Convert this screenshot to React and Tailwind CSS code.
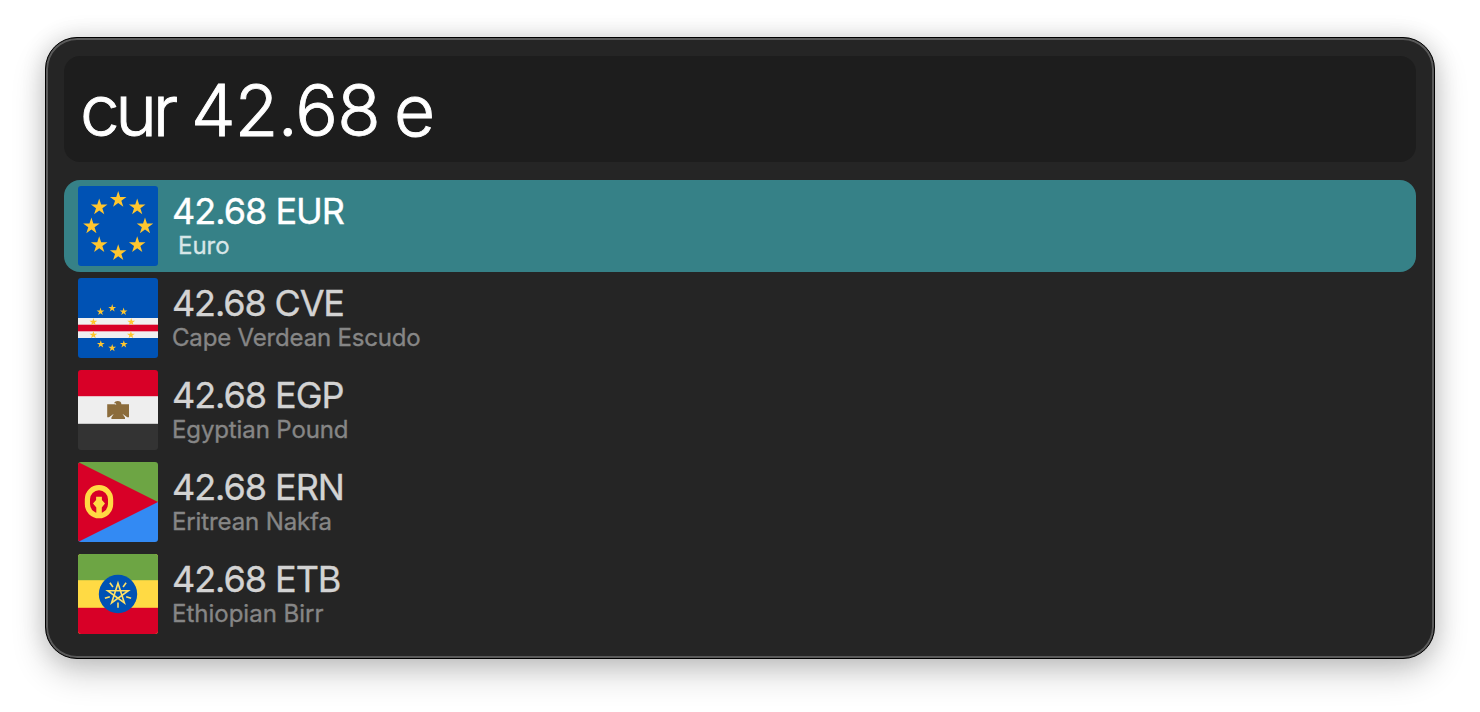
function starPoints(cx, cy, r, inner = 0.382) {
  return Array.from({ length: 10 }, (_, i) => {
    const a = (Math.PI / 5) * i - Math.PI / 2;
    const d = i % 2 ? r * inner : r;
    return `${(cx + d * Math.cos(a)).toFixed(2)},${(cy + d * Math.sin(a)).toFixed(2)}`;
  }).join(" ");
}

function Stars({ centers, r }) {
  return centers.map(([x, y]) => (
    <polygon key={`${x}-${y}`} points={starPoints(x, y, r)} fill="#ffc62e" />
  ));
}

function Flag({ children }) {
  return (
    <svg viewBox="0 0 80 80" className="block size-20 shrink-0 rounded-[3px]" aria-hidden="true">
      {children}
    </svg>
  );
}

const EuroFlag = () => (
  <Flag>
    <rect width="80" height="80" fill="#0052b4" />
    <Stars
      r={8.7}
      centers={[[40.2, 13.7], [59.2, 21.3], [67, 40.3], [59.2, 59], [40.2, 67], [21.2, 59], [13.4, 40.3], [21.2, 21.3]]}
    />
  </Flag>
);

const CapeVerdeFlag = () => (
  <Flag>
    <rect width="80" height="80" fill="#0052b4" />
    <rect y="40" width="80" height="20" fill="#f0f0f0" />
    <rect y="46.7" width="80" height="6.6" fill="#d80027" />
    <Stars
      r={4.1}
      centers={[
        [34.2, 30.2], [45.6, 33.7], [53.2, 44], [52.9, 57], [45.8, 66.3],
        [34.2, 70], [22.8, 66.3], [15.4, 57], [15.4, 44], [22.5, 33.7],
      ]}
    />
  </Flag>
);

const EgyptFlag = () => (
  <Flag>
    <rect y="26" width="80" height="28" fill="#eeeeee" />
    <rect width="80" height="26.2" fill="#d80027" />
    <rect y="53.8" width="80" height="26.2" fill="#333333" />
    <path
      d="M51 34.2 H43.4 C43.4 32.2 41.9 31 39.7 31 C38 31 36.6 31.9 36.1 33.3 C37.4 33 38.2 33.3 38.2 34.8 L36.8 34.2 H29.2 V47.2 H31 L35.8 43.8 L33.4 47.6 V48.9 H47 V47.6 L44.4 43.8 L49.2 47.2 H51 Z"
      fill="#8b6c3c"
    />
  </Flag>
);

const EritreaFlag = () => (
  <Flag>
    <rect width="80" height="40" fill="#6da544" />
    <rect y="40" width="80" height="40" fill="#338af3" />
    <path d="M0 0 L80 40 L0 80 Z" fill="#d80027" />
    <rect x="9.4" y="25.7" width="23.2" height="28" rx="11.6" fill="none" stroke="#ffda44" strokeWidth="5.2" />
    <path
      d="M18.1 34.7 H23.9 V38 L27 41.6 L23.8 45.6 V54 H18.3 V45.6 L15 41.6 L18.1 38 Z"
      fill="#ffda44"
    />
  </Flag>
);

const EthiopiaFlag = () => (
  <Flag>
    <rect width="80" height="80" fill="#ffda44" />
    <rect width="80" height="26.2" fill="#6da544" />
    <rect y="53.8" width="80" height="26.2" fill="#d80027" />
    <circle cx="40" cy="40" r="19.2" fill="#0052b4" />
    <g fill="none" stroke="#ffe066" strokeWidth="1.6">
      <path d="M40 29.2 L46.4 48.9 L29.7 36.7 H50.3 L33.6 48.9 Z" />
      {[36, 108, 180, 252, 324].map((a) => (
        <path key={a} d="M40 31.4 V26.2" transform={`rotate(${a} 40 40)`} />
      ))}
    </g>
  </Flag>
);

const results = [
  { code: "EUR", name: "Euro", Icon: EuroFlag, selected: true, title: "tracking-[-1px]", sub: "tracking-normal" },
  { code: "CVE", name: "Cape Verdean Escudo", Icon: CapeVerdeFlag, title: "tracking-[-1.15px]", sub: "tracking-[-0.17px]" },
  { code: "EGP", name: "Egyptian Pound", Icon: EgyptFlag, title: "tracking-[-1.05px]", sub: "tracking-[-0.12px]" },
  { code: "ERN", name: "Eritrean Nakfa", Icon: EritreaFlag, title: "tracking-[-1.05px]", sub: "tracking-[-0.12px]" },
  { code: "ETB", name: "Ethiopian Birr", Icon: EthiopiaFlag, title: "tracking-[-1.05px]", sub: "tracking-normal" },
];

function ResultRow({ code, name, Icon, selected, title, sub }) {
  return (
    <li className={`flex h-[92px] items-center gap-3.5 rounded-2xl pl-3.5 ${selected ? "bg-[#368187]" : ""}`}>
      <Icon />
      <div className="flex flex-col whitespace-nowrap [-webkit-text-stroke:0.35px_currentColor]">
        <span className={`text-[36px] leading-[38px] ${title} ${selected ? "text-white" : "text-[#d3d3d3]"}`}>
          42.68 {code}
        </span>
        <span
          className={`pt-px text-[24px] leading-[30px] ${sub} ${selected ? "pl-1.5 text-[#d7e6e7]" : "text-[#868686]"}`}
        >
          {name}
        </span>
      </div>
    </li>
  );
}

export default function App() {
  return (
    <div className="h-[712px] w-[1480px] overflow-hidden bg-white px-[45px] pt-[37px] font-['Inter',sans-serif]">
      <main className="h-[622px] rounded-[32px] border border-black bg-[#252525] px-4 pt-4 shadow-[0_14px_34px_rgba(0,0,0,0.2),0_0_24px_rgba(0,0,0,0.14)] ring-2 ring-[#5a5a5a] ring-inset">
        <div className="mx-0.5 mt-0.5 flex h-[106px] items-center rounded-2xl bg-[#1d1d1d] px-4 pt-[3px]">
          <span className="text-[71px] leading-none font-light tracking-[-2.9px] whitespace-pre text-white [-webkit-text-stroke:0.9px_currentColor]">
            <span className="tracking-[-4.4px]">cur</span>{" "}
            <span className="tracking-[-0.7px]">42.68</span>
            <span className="tracking-[-6px]">{" "}</span>e
          </span>
        </div>
        <ul className="mx-0.5 mt-[18px]">
          {results.map((r) => (
            <ResultRow key={r.code} {...r} />
          ))}
        </ul>
      </main>
    </div>
  );
}
